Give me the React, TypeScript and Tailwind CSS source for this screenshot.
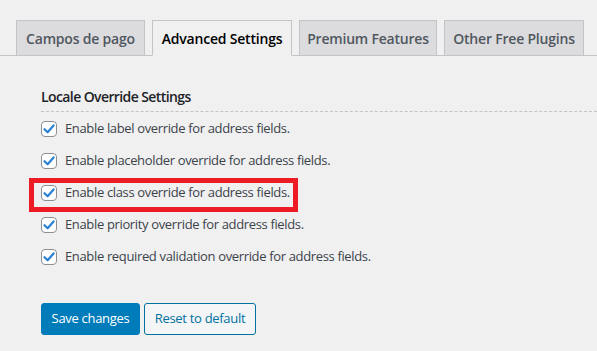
import { useState } from "react";

const tabs = ["Campos de pago", "Advanced Settings", "Premium Features", "Other Free Plugins"];
const tabWidths = ["w-[129px]", "w-[140px]", "w-[138px]", "w-[140px]"];

const options = [
  "Enable label override for address fields.",
  "Enable placeholder override for address fields.",
  "Enable class override for address fields.",
  "Enable priority override for address fields.",
  "Enable required validation override for address fields.",
];

const CheckBox = ({ checked, onChange }: { checked: boolean; onChange: () => void }) => (
  <button
    type="button"
    onClick={onChange}
    className="flex h-4 w-4 shrink-0 items-center justify-center rounded-[4px] border border-[#8c8f94] bg-white"
  >
    {checked && (
      <svg width="14" height="14" viewBox="0 0 14 14">
        <path d="M2.5 7.2 L5.6 10.2 L11.6 3.4" fill="none" stroke="#2b7fd0" strokeWidth="2.2" strokeLinecap="round" strokeLinejoin="round" />
      </svg>
    )}
  </button>
);

const App = () => {
  const [active, setActive] = useState(1);
  const [checks, setChecks] = useState([true, true, true, true, true]);

  const toggle = (i: number) => {
    setChecks((prev) => prev.map((c, j) => (j === i ? !c : c)));
  };

  return (
    <div className="relative h-[351px] w-[597px] overflow-hidden bg-[#f0f0f1] font-['Open_Sans',sans-serif]">
      {/* onglets */}
      <div className="flex items-end border-b border-[#c3c4c7] pl-[9px] pt-[20px]">
        {tabs.map((t, i) => (
          <button
            key={t}
            onClick={() => setActive(i)}
            className={
              "-mb-px ml-[7px] flex h-[36px] items-center justify-center border border-[#c3c4c7] text-[14px] font-semibold tracking-[-0.2px] " +
              tabWidths[i] +
              (i === active
                ? " border-b-[#f0f0f1] bg-[#f0f0f1] text-black"
                : " bg-[#dcdcde] text-[#50575e]")
            }
          >
            {t}
          </button>
        ))}
      </div>

      <div className="pl-[41px]">
        <h2 className="mt-[31px] text-[14px] leading-[20px] font-semibold tracking-[-0.6px] text-[#1d2327]">
          Locale Override Settings
        </h2>
        <div className="mt-[4px] border-t border-dashed border-[#c3c4c7]" />

        <div className="mt-[1px] flex flex-col">
          {options.map((o, i) => (
            <label key={o} className="flex h-[32px] cursor-pointer items-center gap-[8px]">
              <CheckBox checked={checks[i]} onChange={() => toggle(i)} />
              <span className="text-[13px] tracking-[-0.35px] text-[#3c434a]">{o}</span>
            </label>
          ))}
        </div>

        <div className="mt-[30px] flex gap-[4px]">
          <button className="h-[32px] w-[99px] rounded-[3px] border border-[#007cba] bg-[#007cba] text-[13px] tracking-[-0.3px] text-white">
            Save changes
          </button>
          <button className="h-[32px] w-[112px] rounded-[3px] border border-[#0071a1] bg-[#f3f5f6] text-[13px] tracking-[-0.3px] text-[#0071a1]">
            Reset to default
          </button>
        </div>
      </div>

      {/* cadre rouge d'annotation */}
      <div className="pointer-events-none absolute left-[29px] top-[178px] h-[34px] w-[269px] border-[5px] border-[#ed1c24]" />
    </div>
  );
};

export default App;
